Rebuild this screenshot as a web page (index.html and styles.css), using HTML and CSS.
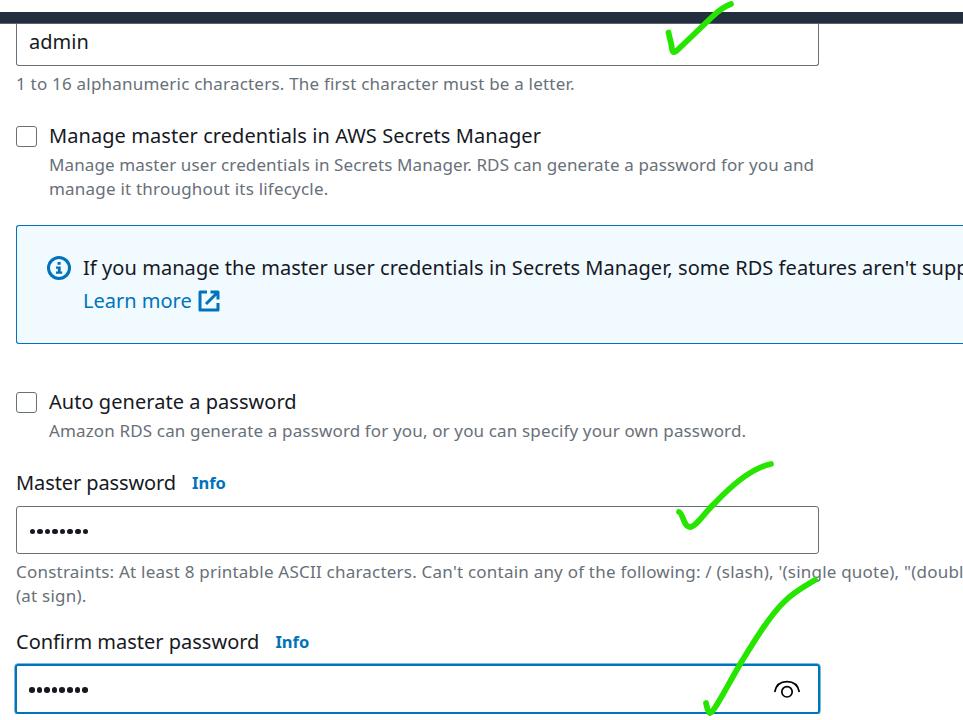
FILE: index.html
```html
<!DOCTYPE html>
<html lang="en">
<head>
<meta charset="utf-8">
<title>Create database</title>
<link rel="stylesheet" href="styles.css">
</head>
<body>
<div class="topbar"></div>
<main class="form">
  <div class="field field-top"><span class="value">admin</span></div>
  <p class="hint h-chars">1 to 16 alphanumeric characters. The first character must be a letter.</p>

  <div class="option option-secrets">
    <span class="checkbox"></span>
    <div class="option-text">
      <div class="label label-secrets">Manage master credentials in AWS Secrets Manager</div>
      <p class="hint hint-secrets">Manage master user credentials in Secrets Manager. RDS can generate a password for you and<br><span class="lifecycle">manage it throughout its lifecycle.</span></p>
    </div>
  </div>

  <section class="alert">
    <svg class="info-icon" viewBox="0 0 24 24"><circle cx="12" cy="12" r="10.5"/><path d="M10.500 6h3.200v2.800h-3.200zM9 10.500h4.700v5h1.500v2.300H9v-2.300h1.800v-2.700H9z"/></svg>
    <div class="alert-text">
      <div class="alert-message">If you manage the master user credentials in Secrets Manager, some RDS features aren't supp</div>
      <div class="link">Learn more<svg class="ext-icon" viewBox="0 0 22 22"><path d="M9 2H2V20H20V13M12.500 2H20V9.500M20 2L8 14"/></svg></div>
    </div>
  </section>

  <div class="option option-auto">
    <span class="checkbox"></span>
    <div class="option-text">
      <div class="label label-auto">Auto generate a password</div>
      <p class="hint hint-auto">Amazon RDS can generate a password for you, or you can specify your own password.</p>
    </div>
  </div>

  <div class="row row-master"><span>Master password</span><span class="info">Info</span></div>
  <div class="field"><span class="dots"><i></i><i></i><i></i><i></i><i></i><i></i><i></i><i></i></span></div>
  <p class="hint h-constraints">Constraints: At least 8 printable ASCII characters. Can't contain any of the following: / (slash), '(single quote), "(doubl<br>(at sign).</p>

  <div class="row row-confirm"><span>Confirm master password</span><span class="info">Info</span></div>
  <div class="field focused"><span class="dots"><i></i><i></i><i></i><i></i><i></i><i></i><i></i><i></i></span>
    <svg class="eye" viewBox="0 0 28 20"><path d="M1.700 13C3 6 8 2.600 14 2.600S25 6 26.300 13"/><circle cx="14" cy="12.800" r="5.200"/></svg>
  </div>
</main>
<svg class="marks" viewBox="0 0 963 720">
  <path d="M668.500 32.500C670 40 671.500 43 672 49C672.500 53 674 53 677 50.500L712 17C718 11 724 6.500 731 4"/>
  <path d="M679 512C683 513 683.500 527 690 527C696 527 704 513 715 503C731 486 751 468 771 464"/>
  <path d="M706 703C707 707 707.500 712 710 713C714 712 724 692 739 666C753 643 770 615 785 601C795 591 805 586 815 580"/>
</svg>
</body>
</html>
```

FILE: styles.css
```css
* { box-sizing: border-box; }
body {
  margin: 0;
  width: 963px;
  height: 720px;
  padding-top: 12px;
  overflow: hidden;
  background: #fff;
  color: #16191f;
  font-family: "Noto Sans", "Open Sans", sans-serif;
  font-size: 20px;
}
p { margin: 0; }
.topbar { height: 12px; background: #232f3e; border-bottom: 1px solid #596270; }
.form { padding-left: 16px; white-space: nowrap; overflow: hidden; }
.field {
  display: flex;
  align-items: center;
  justify-content: space-between;
  width: 803px;
  height: 48px;
  padding: 3px 12px 0;
  border: 1px solid #687078;
  border-radius: 3px;
}
.field-top { height: 42px; border-top: 0; border-radius: 0 0 3px 3px; padding: 0 12px 7px; }
.hint { font-size: 17px; line-height: 24px; color: #687078; }
.h-chars { margin-top: 6px; letter-spacing: 0.21px; }
.option { display: flex; gap: 12px; }
.option-secrets { margin-top: 26px; }
.checkbox { width: 21px; height: 21px; margin-top: 4px; border: 1px solid #687078; border-radius: 3px; }
.label { line-height: 27px; margin-bottom: 4px; }
.label-secrets { letter-spacing: 0.07px; }
.label-auto { letter-spacing: 0.04px; }
.hint-secrets { letter-spacing: 0.115px; }
.lifecycle { letter-spacing: 0.21px; }
.hint-auto { letter-spacing: 0.145px; }
.alert {
  display: flex;
  gap: 12px;
  height: 119px;
  margin-top: 24px;
  padding: 25px 0 0 30px;
  border: 1px solid #0073bb;
  border-right: 0;
  border-radius: 3px 0 0 3px;
  background: #f1faff;
  overflow: hidden;
  line-height: 33px;
}
.alert-message { letter-spacing: 0.06px; }
.info-icon { flex: none; width: 24px; height: 24px; margin-top: 5px; }
.info-icon circle { fill: none; stroke: #0073bb; stroke-width: 3; }
.info-icon path { fill: #0073bb; }
.link { display: flex; align-items: center; gap: 6px; color: #0073bb; }
.ext-icon { width: 22px; height: 22px; fill: none; stroke: #0073bb; stroke-width: 3; stroke-linejoin: round; }
.option-auto { margin-top: 44px; }
.row { display: flex; gap: 16px; line-height: 31px; letter-spacing: -0.1px; }
.info { font-size: 16.5px; font-weight: 700; letter-spacing: 0; color: #0073bb; }
.row-master { margin-top: 24px; margin-bottom: 8px; }
.h-constraints { margin-top: 6px; letter-spacing: 0.22px; }
.row-confirm { margin-top: 18px; margin-bottom: 7px; letter-spacing: 0; }
.dots { display: flex; gap: 2px; margin-left: 0.500px; }
.dots i { width: 5.600px; height: 5.600px; border-radius: 50%; background: #16191f; }
.focused { width: 805px; height: 50px; margin-left: -1px; padding: 2px 17px 0 11.500px; border: 2px solid #0073bb; box-shadow: 0 0 0 0.500px #0073bb; }
.eye { width: 28px; height: 20px; margin-top: -2px; fill: none; stroke: #000; stroke-width: 1.700; }
.marks {
  position: absolute;
  inset: 0;
  width: 963px;
  height: 720px;
  fill: none;
  stroke: #26e600;
  stroke-width: 5.800;
  stroke-linecap: round;
  stroke-linejoin: round;
  pointer-events: none;
}
```
